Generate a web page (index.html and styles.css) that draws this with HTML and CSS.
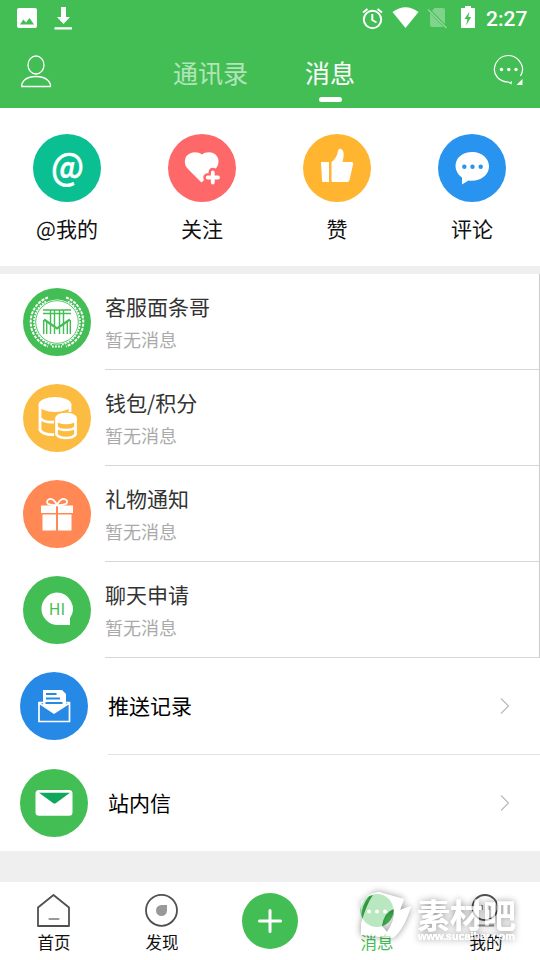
FILE: index.html
```html
<!DOCTYPE html>
<html lang="zh-CN">
<head>
<meta charset="utf-8">
<title>消息</title>
<link rel="stylesheet" href="styles.css">
</head>
<body>
<div class="screen">
  <div class="status">
    <svg class="status-left" width="60" height="36" viewBox="16 0 60 36">
      <path fill="#fff" fill-rule="evenodd" d="M19 8H35Q37 8 37 10V26Q37 28 35 28H19Q17 28 17 26V10Q17 8 19 8ZM20 24.500H34L29.500 18L26 22.500L23.300 19.500Z"/>
      <path fill="#fff" d="M61 7H66V17H70L63.500 24L57 17H61ZM54.500 27.300H72V29.600H54.500Z"/>
    </svg>
    <svg width="118" height="36" viewBox="360 0 118 36">
      <g fill="none" stroke="#fff" stroke-width="2"><circle cx="372.500" cy="19.500" r="8.700"/><path d="M372.300 14V20L376.500 22.500M363 12.500L367.500 9M377.500 9L382 12.500"/></g>
      <path fill="#fff" d="M392.500 12Q405.500 2.500 418.500 12L405.500 28Z"/>
      <path fill="#fff" opacity=".32" d="M434.500 8H443Q445 8 445 10V24L432 11ZM430 13L443.500 27H432Q430 27 430 25Z"/>
      <path stroke="#fff" opacity=".4" stroke-width="1.600" d="M428 9.500L446.500 28"/>
      <path fill="#fff" fill-rule="evenodd" d="M465 6H471V8H475V28H461V8H465ZM469.500 11.500L464.500 19H467.500L466 25.500L471.200 17H468.300Z"/>
    </svg>
    <span class="clock">2:27</span>
  </div>
  <header class="header">
    <svg width="32" height="34" viewBox="20 54.500 32 34" fill="none" stroke="#fff" stroke-width="1.300">
      <ellipse cx="36" cy="65.500" rx="8" ry="9"/><path d="M21.800 87Q21.200 84 24 81Q28 77 36 77T48 81Q51 84 50.400 87Z"/>
    </svg>
    <nav class="tabs"><span class="tab">通讯录</span><span class="tab tab-on">消息</span></nav>
    <svg width="32" height="34" viewBox="493 54 32 34">
      <path fill="none" stroke="#fff" stroke-width="1.200" d="M520.500 76Q524.500 69 521 63.500Q516.500 55.500 508.500 55.500Q500 55.500 496 63Q492 71 497.500 77.500Q502 82 508.500 82L511 83.500L511.500 81.500"/>
      <g fill="#fff"><circle cx="501.500" cy="69.500" r="1.700"/><circle cx="508.800" cy="69.500" r="1.700"/><circle cx="516" cy="69.500" r="1.700"/><path d="M522.500 79V85H516.500Z"/></g>
    </svg>
  </header>

  <section class="shortcuts">
    <div class="shortcut">
      <svg class="disc" viewBox="0 0 68 68"><circle cx="34" cy="34" r="34" fill="#0abf91"/><text class="at-sign" x="18" y="45.500" textLength="33" lengthAdjust="spacingAndGlyphs">@</text></svg>
      <span>@我的</span>
    </div>
    <div class="shortcut">
      <svg class="disc" viewBox="0 0 68 68"><circle cx="34" cy="34" r="34" fill="#ff6868"/>
        <path fill="#fff" d="M34 20.500C29 16.500 22 18 18.500 22C15.500 27 17 32 20 35L33.500 48.500L49 33C52 28 50.500 22 46 19.500C42 17.500 37 18 34 20.500Z"/>
        <path fill="none" stroke="#ff6868" stroke-width="8.500" stroke-linecap="round" d="M44.800 38V49M39.500 43.500H50"/>
        <path fill="none" stroke="#fff" stroke-width="3.800" stroke-linecap="round" d="M44.800 38.500V48.500M39.700 43.500H50"/></svg>
      <span>关注</span>
    </div>
    <div class="shortcut">
      <svg class="disc" viewBox="0 0 68 68"><circle cx="34" cy="34" r="34" fill="#ffb530"/>
        <path fill="#fff" d="M18 28H26V48H20.500Q19 48 19 46.500ZM28.500 28Q34 24 35 17Q35.500 14.500 37.500 14.800Q41.500 16 40.500 23L39.500 28H48.500Q50.500 28 50.200 30L46.500 46Q46 48 44 48H30Q28.500 48 28.500 46.500Z"/></svg>
      <span>赞</span>
    </div>
    <div class="shortcut">
      <svg class="disc" viewBox="0 0 68 68"><circle cx="34" cy="34" r="34" fill="#2994ef"/>
        <path fill="#fff" d="M34.500 18C44 18 51 24.500 51 32.500C51 42 41 48 30.500 46.500L24 50.500V43.500C13 36 16 18 34.500 18Z"/>
        <g fill="#2994ef"><circle cx="26.300" cy="32.700" r="2.200"/><circle cx="34.500" cy="32.700" r="2.200"/><circle cx="42.700" cy="32.700" r="2.200"/></g></svg>
      <span>评论</span>
    </div>
  </section>

  <section class="threads">
    <div class="thread">
      <svg class="disc" viewBox="0 0 68 68"><circle cx="34" cy="34" r="34" fill="#43be55"/>
        <g fill="none" stroke="#fff"><path stroke-width="2" stroke-dasharray="3 1.200" d="M25 9.500A26 26 0 0 0 25 58.500M43 9.500A26 26 0 0 1 43 58.500"/>
        <path stroke-width="1.800" stroke-dasharray="1.800 1.200" d="M23 13.500A23.300 23.300 0 0 0 29 56.500M45 13.500A23.300 23.300 0 0 1 39 56.500M29 58.500H39"/></g>
        <circle cx="34" cy="34" r="22.500" fill="#fff"/>
        <g fill="none" stroke="#43be55"><circle cx="34" cy="34" r="21.300" stroke-width=".9"/>
        <path stroke-width="1.400" d="M20 22H48M20 25.500H48M27.500 22V46M31.500 22V38M36.500 22V38M40.500 22V46M31.500 40V46M36.500 40V46M20.700 46V32M23.700 46V34M47.300 46V32M44.300 46V34"/>
        <path stroke-width="2.200" d="M21 31.500L34 40.500L47 31.500"/></g></svg>
      <div class="thread-body"><b>客服面条哥</b><span>暂无消息</span></div>
    </div>
    <div class="thread">
      <svg class="disc" viewBox="0 0 68 68"><circle cx="34" cy="34" r="34" fill="#fcbc41"/>
        <g fill="none" stroke="#fff" stroke-width="2.800"><path d="M17 20V46Q20 51 32 50.500M17 34Q21 39 32 38M47 20V28"/><ellipse cx="32" cy="20.500" rx="15" ry="6" fill="#fff"/></g>
        <path fill="#fcbc41" d="M31 33Q34 28.500 42.500 28.500T55 35V52H31Z"/>
        <g fill="none" stroke="#fff" stroke-width="2.700"><path d="M33.500 35V50.500Q36 54 43 54T52.500 50.500V35M33.500 43Q36 46 43 46T52.500 43"/><ellipse cx="43" cy="34.500" rx="9.500" ry="4.500" fill="#fff"/></g></svg>
      <div class="thread-body"><b>钱包/积分</b><span>暂无消息</span></div>
    </div>
    <div class="thread">
      <svg class="disc" viewBox="0 0 68 68"><circle cx="34" cy="34" r="34" fill="#ff8854"/>
        <path fill="#fff" d="M18 25.500H33V33H18ZM35 25.500H50V33H35ZM19.500 34.500H33V50.500H19.500ZM35 34.500H48.500V50.500H35Z"/>
        <path fill="none" stroke="#fff" stroke-width="1.800" d="M34 25Q27 25.500 24.500 23.500Q23 20 27 18.800Q31 18.500 34 25Q37 18.500 41 18.800Q45.500 20 43.500 23.500Q41 25.500 34 25Z"/></svg>
      <div class="thread-body"><b>礼物通知</b><span>暂无消息</span></div>
    </div>
    <div class="thread">
      <svg class="disc" viewBox="0 0 68 68"><circle cx="34" cy="34" r="34" fill="#43be55"/>
        <path fill="#fff" d="M33.500 16.500A16.300 16.300 0 0 1 47 42V49H33.500A16.300 16.300 0 0 1 33.500 16.500Z"/>
        <text class="hi" x="34" y="39" text-anchor="middle">HI</text></svg>
      <div class="thread-body"><b>聊天申请</b><span>暂无消息</span></div>
    </div>
  </section>

  <section class="links">
    <div class="link">
      <svg class="disc" viewBox="0 0 68 68"><circle cx="34" cy="34" r="34" fill="#2789e6"/>
        <path fill="none" stroke="#fff" stroke-width="1.700" d="M23 30.500H19V49.500H49.500V30.500H46M19 31L34 41L49.500 31"/>
        <path fill="#fff" d="M23 18H42L46 22V33L34 41L23 33Z"/>
        <path stroke="#2789e6" stroke-width="1.800" d="M26 22H36.500M26 26.500H40M25.500 31H42.500"/></svg>
      <span>推送记录</span>
      <svg class="chevron" viewBox="0 0 10 18"><path d="M1 1.500L8.500 9L1 16.500"/></svg>
    </div>
    <div class="link">
      <svg class="disc" viewBox="0 0 68 68"><circle cx="34" cy="34" r="34" fill="#43be55"/>
        <rect x="15.500" y="21" width="37" height="25.700" rx="3.500" fill="#fff"/>
        <path fill="#10a65c" d="M19 23.700H50L36 34Q34.500 35.200 33 34Z"/></svg>
      <span>站内信</span>
      <svg class="chevron" viewBox="0 0 10 18"><path d="M1 1.500L8.500 9L1 16.500"/></svg>
    </div>
  </section>

  <footer class="tabbar">
    <div class="tabbar-item">
      <svg class="tab-icon" viewBox="0 0 36 36" fill="none" stroke="#505050" stroke-width="1.800" stroke-linejoin="round"><path d="M2 33V14.500L17.500 2L33 14.500V33Z"/><path stroke="#999" stroke-width="2.200" stroke-linecap="round" d="M13.500 26H22.500"/></svg>
      <span>首页</span>
    </div>
    <div class="tabbar-item">
      <svg class="tab-icon" viewBox="0 0 36 36"><circle cx="17.500" cy="17.300" r="15.500" fill="none" stroke="#505050" stroke-width="1.800"/><path fill="#999" d="M17.500 12H23V17.500A5.500 5.500 0 1 1 17.500 12Z"/></svg>
      <span>发现</span>
    </div>
    <div class="tabbar-item">
      <svg class="add" viewBox="0 0 56 56"><circle cx="28" cy="28" r="28" fill="#43be55"/><path stroke="#fff" stroke-width="3" stroke-linecap="round" d="M28 17.500V38.500M17.500 28H38.500"/></svg>
    </div>
    <div class="tabbar-item tabbar-on">
      <svg class="tab-icon" viewBox="0 0 36 36"><circle cx="18" cy="17.500" r="16.500" fill="#43be55"/><g fill="#fff"><circle cx="10" cy="18.500" r="2"/><circle cx="18" cy="18.500" r="2"/><circle cx="26" cy="18.500" r="2"/></g></svg>
      <span>消息</span>
    </div>
    <div class="tabbar-item">
      <svg class="tab-icon" viewBox="0 0 36 36" fill="none" stroke="#505050" stroke-width="1.800"><circle cx="17" cy="14.500" r="12.500"/><path stroke="#888" d="M14 12V17M20.500 12V17M9 32.500H26"/></svg>
      <span>我的</span>
    </div>
    <svg class="watermark" viewBox="350 882 190 78">
      <defs>
        <filter id="halo" filterUnits="userSpaceOnUse" x="350" y="882" width="190" height="78" color-interpolation-filters="sRGB">
          <feColorMatrix in="SourceGraphic" values="0 0 0 0 0  0 0 0 0 0  0 0 0 0 0  0 0 0 1.600 0" result="solid"/>
          <feGaussianBlur in="solid" stdDeviation="3.500" result="soft"/>
          <feComponentTransfer in="soft" result="faint"><feFuncA type="linear" slope=".42"/></feComponentTransfer>
          <feComposite in="faint" in2="solid" operator="out" result="outer"/>
          <feMerge><feMergeNode in="outer"/><feMergeNode in="SourceGraphic"/></feMerge>
        </filter>
      </defs>
      <g filter="url(#halo)">
        <path fill="#fff" fill-opacity=".63" fill-rule="evenodd" d="M361 902L366 898Q370 893 379 892L404 899L400 910L411 906Q404 930 393 938L361 935V924Q366 905 373 895L369 896Q362 905 361 916ZM382 926Q384 912 394 909Q395 921 387 932Z"/>
        <text class="wm-name" x="417" y="928" textLength="99">素材吧</text>
        <text class="wm-url" x="418" y="940" textLength="97">www.sucaibar.com</text>
      </g>
    </svg>
  </footer>
</div>
</body>
</html>
```
FILE: styles.css
```css
* { box-sizing: border-box; }
body {
  margin: 0;
  background: #efefef;
  font-family: "Noto Sans CJK SC", sans-serif;
  color: #111;
}
svg { display: block; flex: none; }
.screen { width: 540px; height: 960px; display: flex; flex-direction: column; overflow: hidden; }

.status { height: 36px; background: #43be55; display: flex; padding: 0 12px 0 16px; }
.status-left { margin-right: auto; }
.clock { width: 50px; padding-left: 8px; color: #fff; font: 500 21px/38px Roboto, sans-serif; white-space: nowrap; }

.header { height: 72px; background: #43be55; display: flex; padding: 18px 15px 0 20px; }
.tabs { display: flex; gap: 57px; margin: 0 auto 0 121px; }
.tab { color: rgba(255, 255, 255, .6); font-size: 25px; line-height: 36px; height: 48px; }
.tab-on { color: #fff; display: flex; flex-direction: column; align-items: center; }
.tab-on::after { content: ""; width: 23px; height: 5px; margin-top: 7px; border-radius: 3px; background: #fff; }

.disc { width: 68px; height: 68px; }
.shortcuts { height: 158px; padding-top: 26px; background: #fff; display: grid; grid-template-columns: repeat(4, 135px); }
.shortcut { display: flex; flex-direction: column; align-items: center; font-size: 21px; line-height: 30px; gap: 11px; padding-right: 1px; }
.at-sign { font: 500 37px "Noto Sans CJK SC", sans-serif; fill: #fff; stroke: #fff; stroke-width: .5; }
.hi { font: 400 16px "Noto Sans CJK SC", sans-serif; fill: #43be55; }

.threads { margin-top: 8px; background: #fff; border-right: 1px solid #ccc; }
.thread { height: 96px; display: flex; align-items: center; padding-left: 23px; gap: 14px; }
.thread-body { flex: 1; height: 96px; border-bottom: 1px solid #d6d6d6; display: flex; flex-direction: column; padding-top: 17px; }
.thread-body b { font-size: 21px; font-weight: 400; line-height: 30px; color: #333; }
.thread-body span { font-size: 18px; line-height: 26px; margin-top: 5px; color: #aaa; }

.links { background: #fff; }
.link { height: 97px; display: flex; align-items: center; padding: 0 30px 1px 20px; gap: 20px; font-size: 21px; color: #000;
  background: linear-gradient(#e2e2e2, #e2e2e2) 108px 100% / 432px 1px no-repeat; }
.link span { margin-top: -2px; }
.link:last-child { height: 96px; padding-bottom: 0; background: none; }
.chevron { width: 10px; height: 18px; margin-left: auto; fill: none; stroke: #bbb; stroke-width: 1.2; }

.tabbar { position: relative; height: 78px; margin-top: 31px; background: #fff; display: grid; grid-template-columns: repeat(5, 108px); }
.tabbar-item { display: flex; flex-direction: column; align-items: center; padding-top: 11px; font-size: 16.5px; line-height: 24px; }
.tabbar-item span { margin-top: 1px; }
.tab-icon { width: 36px; height: 36px; }
.tabbar-on { color: #43be55; padding-right: 2px; }
.add { width: 56px; height: 56px; }
.watermark { position: absolute; right: 0; top: 0; width: 190px; height: 78px; }
.wm-name { font: 700 33px "Noto Sans CJK SC", sans-serif; fill: #fff; fill-opacity: .7; }
.wm-url { font: 700 11px "Liberation Sans", sans-serif; fill: #fff; fill-opacity: .8; }
```
